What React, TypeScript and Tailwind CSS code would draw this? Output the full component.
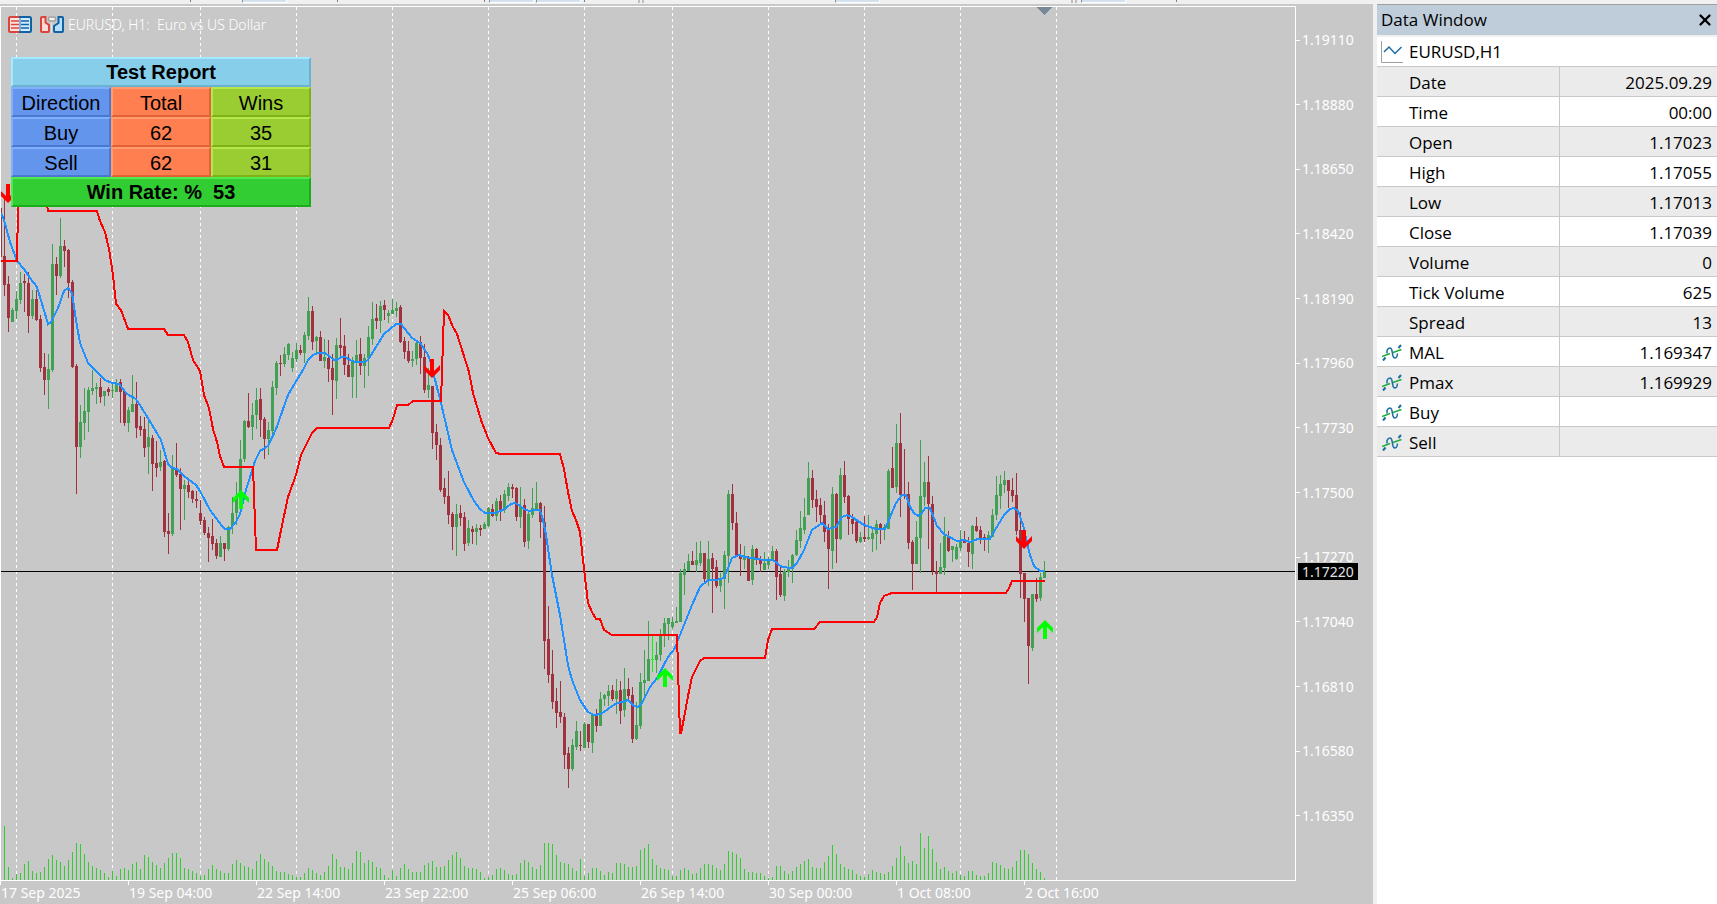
import { X } from "lucide-react";

// one candle per line item: direction, high, body top, body bottom, low (chart units)
const CANDLES = `
R 198 256 285 296,R 276 284 318 332,G 308 310 322 322,G 291 299 311 319,G 272 283 300 304,R 274 281 283 312,
R 272 283 316 333,G 290 299 316 319,R 290 299 320 321,R 315 319 368 372,R 353 367 380 395,G 354 369 380 409,
G 244 264 370 372,R 257 264 276 295,G 218 246 276 278,R 240 246 251 267,R 249 250 283 298,R 280 282 367 368,
R 364 366 447 494,G 405 422 447 458,G 388 411 423 440,G 387 390 412 432,G 370 388 391 395,G 383 387 389 404,
R 378 387 397 403,G 391 391 396 406,R 387 389 392 396,G 383 390 391 398,G 379 383 392 392,R 379 382 392 423,
R 390 391 423 426,G 407 410 423 432,G 375 404 412 412,R 382 404 428 438,R 416 426 430 436,R 417 429 448 457,
G 419 437 447 474,R 435 438 464 491,R 441 463 468 477,G 450 462 467 471,R 460 461 532 537,R 513 531 534 554,
G 455 469 534 536,R 443 469 475 477,R 468 474 489 530,G 480 485 489 520,R 481 485 492 498,R 490 491 499 503,
R 491 499 501 508,R 500 513 521 525,R 517 520 533 535,R 527 533 538 562,R 519 536 544 550,R 539 543 556 559,
G 536 543 557 557,R 543 543 549 561,G 526 527 549 551,G 497 513 526 534,G 482 497 513 525,G 440 459 500 501,
G 420 421 459 462,R 393 421 427 428,G 403 415 427 440,G 388 400 415 429,R 388 399 420 437,R 417 419 439 459,
G 422 430 439 455,G 381 387 431 434,G 361 363 388 395,R 355 363 364 376,G 347 354 364 367,G 343 344 355 360,
G 352 358 368 372,G 343 350 359 362,R 345 350 353 355,G 332 335 353 363,G 297 311 336 340,R 306 311 342 350,
G 336 337 341 354,R 331 337 361 361,G 339 357 361 368,R 340 358 369 382,R 354 368 380 415,G 338 345 381 399,
R 318 345 348 358,R 335 346 365 375,R 354 365 377 377,G 357 361 377 398,G 340 355 362 398,R 338 354 366 375,
G 354 358 366 388,G 326 337 358 376,G 302 319 339 345,R 304 318 321 329,G 301 306 321 333,R 300 305 310 320,
G 310 313 316 323,G 299 310 314 314,G 302 308 311 317,R 305 307 342 343,R 337 341 352 359,R 341 351 361 363,
G 351 359 361 367,G 342 343 359 365,R 336 342 358 374,R 344 357 390 393,G 368 385 390 398,R 386 386 433 449,
R 424 432 445 460,R 438 445 490 492,R 478 488 497 504,R 471 496 515 524,R 512 514 527 550,G 504 514 527 556,
R 505 513 518 526,R 512 517 544 551,G 520 528 543 546,R 526 529 532 544,G 524 528 532 545,R 525 528 530 536,
G 522 524 529 529,G 507 508 526 527,R 504 509 516 517,G 498 501 516 521,R 495 501 510 521,G 490 494 510 513,
G 483 487 496 501,R 484 487 489 498,R 487 488 517 521,G 487 507 517 528,R 499 505 542 547,G 512 514 541 549,
G 488 508 515 518,G 482 503 509 509,R 502 503 522 538,R 506 522 641 669,R 606 639 675 683,R 650 674 702 709,
R 688 701 713 728,R 681 712 717 723,R 713 717 755 769,R 747 753 769 788,G 739 745 769 771,G 721 731 747 750,
R 731 745 746 751,G 722 724 748 748,R 724 724 742 748,G 713 715 743 753,R 709 714 726 732,G 692 699 726 726,
G 694 695 699 706,G 685 691 696 706,R 685 690 699 701,G 679 691 699 714,R 681 690 711 724,G 668 689 710 717,
R 678 689 696 700,R 687 695 739 743,G 702 725 739 740,G 673 682 726 729,G 650 680 683 696,G 621 659 681 681,
L 636 659 660 672,G 642 655 660 673,G 629 635 655 661,G 618 623 636 647,G 618 618 624 640,G 617 622 627 629,
G 607 621 623 623,G 569 573 622 622,G 563 569 575 595,G 554 561 571 571,R 551 561 565 565,G 542 560 565 572,
G 541 553 563 566,R 553 553 579 583,G 541 559 579 586,R 553 558 569 613,R 560 567 586 588,G 573 579 586 592,
G 551 555 579 609,G 490 494 556 583,R 484 494 523 530,R 512 523 555 557,R 544 555 559 576,G 546 557 560 569,
R 556 557 581 581,G 545 549 580 585,R 548 549 560 565,R 556 560 564 572,G 552 563 570 570,G 557 561 565 569,
G 546 551 561 561,R 549 551 577 600,R 565 574 595 597,G 569 571 596 601,G 560 568 572 577,G 554 555 569 583,
G 530 540 555 556,G 511 528 541 548,G 498 517 530 534,G 462 478 515 515,R 470 478 500 508,R 490 499 507 522,
R 498 505 515 524,R 501 515 532 542,R 524 529 549 589,G 487 494 551 569,R 493 494 539 563,G 468 475 539 540,
R 461 475 497 503,R 495 496 519 535,R 514 519 524 534,R 521 522 541 543,G 532 537 542 543,R 516 537 539 542,
G 515 537 539 540,G 528 533 539 552,G 520 524 534 550,R 523 524 530 544,G 524 527 530 540,G 469 471 529 529,
R 447 468 488 488,G 424 443 487 493,R 413 443 495 517,R 449 494 496 499,R 482 494 543 549,R 540 542 564 590,
G 521 537 564 564,G 440 496 538 573,G 462 482 497 506,R 456 482 504 549,R 496 504 571 575,R 561 571 574 592,
G 543 567 574 574,G 517 536 568 575,R 531 536 551 552,G 546 546 550 562,G 544 547 559 560,G 530 541 548 551,
R 531 540 543 543,R 537 543 552 567,G 525 526 554 569,R 517 526 531 532,R 526 530 538 544,R 534 537 539 551,
G 531 535 539 553,G 509 515 537 537,G 476 495 515 520,G 475 484 496 509,G 471 480 485 493,R 480 480 491 508,
R 478 490 496 502,R 473 495 531 535,R 512 530 574 598,R 573 573 599 622,R 598 598 646 684,G 594 594 648 651,
R 578 594 599 602,G 573 577 598 601,G 561 572 578 578`
  .trim()
  .split(",")
  .map((item) => {
    const [kind, ...values] = item.trim().split(" ");
    const [high, top, bottom, low] = values.map(Number);
    return { kind, high, top, bottom, low };
  });

const VOLUMES = [
  54, 13, 2, 6, 7, 16, 19, 9, 7, 8, 13, 21, 25, 20, 18, 14, 20, 28, 37, 36, 26,
  18, 14, 12, 10, 7, 3, 9, 4, 11, 12, 10, 16, 18, 11, 25, 23, 18, 15, 12, 17,
  22, 27, 27, 22, 12, 11, 9, 7, 4, 5, 11, 15, 11, 9, 7, 7, 16, 20, 17, 14, 13,
  11, 19, 26, 21, 18, 14, 9, 8, 8, 6, 5, 3, 3, 7, 12, 10, 7, 5, 8, 14, 26, 21,
  13, 13, 11, 17, 29, 28, 17, 20, 18, 13, 12, 5, 2, 10, 4, 12, 16, 11, 8, 8, 8,
  15, 17, 19, 13, 13, 14, 20, 25, 28, 22, 14, 12, 12, 11, 8, 2, 3, 5, 11, 12,
  10, 6, 5, 6, 17, 20, 18, 13, 11, 15, 37, 37, 36, 25, 18, 17, 16, 12, 9, 21, 4,
  7, 12, 12, 9, 5, 8, 7, 17, 17, 16, 13, 13, 14, 30, 32, 36, 21, 15, 12, 11, 10,
  4, 4, 10, 12, 10, 6, 7, 12, 16, 16, 15, 12, 10, 16, 29, 28, 26, 22, 11, 8, 8,
  7, 7, 4, 2, 3, 14, 14, 9, 6, 9, 13, 16, 19, 21, 13, 12, 12, 18, 24, 35, 26,
  16, 13, 11, 10, 6, 4, 3, 6, 10, 8, 7, 6, 8, 14, 22, 34, 24, 17, 19, 16, 47,
  32, 44, 31, 18, 11, 13, 9, 7, 9, 5, 4, 9, 9, 5, 4, 4, 7, 18, 17, 15, 12, 11,
  13, 19, 30, 30, 26, 17, 11, 8, 2,
];

const MAL_LINE =
  "1,213 4,220 10,242 17,261 24,269 30,278 37,287 43,307 48,324 51,322 58,308 64,291 68,288 72,293 76,320 80,343 88,363 105,380 112,383 119,384 127,394 136,399 148,418 161,440 168,464 172,468 177,469 184,476 196,485 200,491 210,510 216,518 222,526 225,529 230,529 236,522 240,514 246,490 255,461 260,451 268,446 276,429 288,395 295,383 303,370 308,360 313,355 318,353 325,353 329,356 334,360 337,360 341,357 345,357 352,361 356,362 364,362 368,360 384,334 396,324 401,324 412,338 420,343 427,353 430,360 441,403 452,450 464,482 474,501 480,509 485,513 495,513 503,510 511,504 515,503 519,505 524,509 529,511 535,510 540,510 543,520 546,535 552,575 560,615 568,665 572,680 580,700 588,712 594,715 601,714 615,704 622,702 628,700 634,706 638,707 642,703 650,687 657,678 668,657 675,648 678,640 692,605 700,587 708,580 716,580 724,578 732,558 739,555 745,557 764,560 773,560 782,567 792,568 797,563 804,550 812,530 822,523 828,529 836,527 842,517 847,515 852,517 858,521 864,525 876,529 885,529 896,503 902,495 906,495 910,507 914,513 918,516 922,513 925,508 930,508 937,526 944,534 957,541 964,540 970,542 978,539 990,539 992,535 1004,515 1010,509 1014,508 1018,511 1023,525 1030,555 1034,566 1040,571 1044,571";

const PMAX_LINE =
  "1,261 17,261 18,207 19,200 46,200 48,211 97,211 100,221 105,232 109,249 113,275 116,304 121,310 128,329 164,329 168,335 184,335 188,342 193,360 200,371 204,395 209,408 213,429 217,442 220,456 224,467 253,467 256,550 277,550 280,535 288,497 296,475 301,455 312,433 317,428 389,428 393,419 397,405 408,405 413,401 441,401 444,311 448,315 453,327 457,334 469,372 473,393 481,420 488,438 496,453 501,454 560,454 564,469 568,492 572,511 576,520 580,532 583,560 588,603 592,612 596,619 600,619 604,630 612,635 677,635 680,733 681,733 684,718 688,696 692,677 700,661 704,658 765,658 768,640 772,629 814,629 820,622 874,622 877,617 880,603 884,596 892,593 1006,593 1009,588 1012,581 1045,581";

const DAY_LINES = [16, 112, 200, 296, 392, 488, 584, 672, 768, 864, 960, 1056];

const PRICES = [
  "1.19110",
  "1.18880",
  "1.18650",
  "1.18420",
  "1.18190",
  "1.17960",
  "1.17730",
  "1.17500",
  "1.17270",
  "1.17040",
  "1.16810",
  "1.16580",
  "1.16350",
];

const DATES = [
  "17 Sep 2025",
  "19 Sep 04:00",
  "22 Sep 14:00",
  "23 Sep 22:00",
  "25 Sep 06:00",
  "26 Sep 14:00",
  "30 Sep 00:00",
  "1 Oct 08:00",
  "2 Oct 16:00",
];

const DATA_ROWS = [
  { label: "Date", value: "2025.09.29" },
  { label: "Time", value: "00:00" },
  { label: "Open", value: "1.17023" },
  { label: "High", value: "1.17055" },
  { label: "Low", value: "1.17013" },
  { label: "Close", value: "1.17039" },
  { label: "Volume", value: "0" },
  { label: "Tick Volume", value: "625" },
  { label: "Spread", value: "13" },
  { label: "MAL", value: "1.169347", indicator: true },
  { label: "Pmax", value: "1.169929", indicator: true },
  { label: "Buy", value: "", indicator: true },
  { label: "Sell", value: "", indicator: true },
];

const CANDLE_FILL: Record<string, string> = {
  G: "fill-[#42a052]",
  R: "fill-[#a0323f]",
  L: "fill-[#00ff00]",
};

const UP_ARROW = "0,0 8,8 8,13 2,7 2,19 -2,19 -2,7 -8,13 -8,8";
const DOWN_ARROW = "0,19 8,11 8,6 2,12 2,0 -2,0 -2,12 -8,6 -8,11";

function Toolbar() {
  const tab = "h-[3px] w-[45px] border-l border-r border-b border-l-[#909090] border-r-white border-b-white bg-[#d3e1ee]";
  const line = "h-[2px] w-px bg-[#808080]";
  const grip = "h-[3px] w-[6px] border-x-2 border-[#c0c0c0]";
  return (
    <div className="flex h-1 shrink-0 items-start overflow-hidden bg-[#f0f0f0]">
      <div className={`ml-[190px] ${line}`} />
      <div className={`ml-[51px] ${tab}`} />
      <div className={`ml-[50px] ${line}`} />
      <div className={`ml-[146px] ${line}`} />
      <div className={`ml-1 ${tab}`} />
      <div className={`ml-[2px] ${tab}`} />
      <div className={`ml-[3px] ${line}`} />
      <div className={`ml-[53px] ${grip}`} />
      <div className={`ml-[191px] ${tab}`} />
      <div className={`ml-[191px] ${grip}`} />
      <div className={`ml-[4px] ${tab}`} />
      <div className={`ml-[50px] ${line}`} />
    </div>
  );
}

function QuoteIcon() {
  return (
    <svg width="24" height="18" viewBox="0 0 24 18" aria-hidden="true">
      <path d="M12 1H2.500Q1 1 1 2.500v12Q1 16 2.500 16H12z" fill="#ffe3df" stroke="#d9453d" strokeWidth="2" />
      <path d="M12 1h9.500q1.500 0 1.500 1.500v12q0 1.500-1.500 1.500H12z" fill="#d2ebff" stroke="#0f62a3" strokeWidth="2" />
      <path d="M3 5h8M3 8.500h8M3 12h8" stroke="#d9453d" strokeWidth="1.500" />
      <path d="M13 5h8M13 8.500h8M13 12h8" stroke="#0f62a3" strokeWidth="1.500" />
      <path d="M12 2v13" stroke="#fff" />
    </svg>
  );
}

function TradeIcon() {
  return (
    <svg width="24" height="18" viewBox="0 0 24 18" aria-hidden="true">
      <path d="M1 2q0-1 1-1h3.500v5.500L9 9v6q0 1-1 1H2q-1 0-1-1z" fill="#ffd9d4" stroke="#d9453d" strokeWidth="2" />
      <path d="M23 2q0-1-1-1h-3.500v6L14 10v5q0 1 1 1h7q1 0 1-1z" fill="#b5e0ff" stroke="#0f62a3" strokeWidth="2" />
      <rect x="8.500" y="1" width="7" height="4" rx="1.500" fill="#f2f2f2" stroke="#a0a0a0" strokeWidth="1.500" />
      <path d="M11.500 6v11" stroke="#e4e4e4" />
    </svg>
  );
}

function ChartIcon() {
  return (
    <svg width="24" height="24" viewBox="0 0 24 24" fill="none" aria-hidden="true">
      <path d="M1.500 1v21.500H23" stroke="#a0a0a0" />
      <path d="M4 12l5-5 6 6.500L21.500 7" stroke="#1c6ea4" strokeWidth="1.500" />
    </svg>
  );
}

function IndicatorIcon() {
  return (
    <svg width="20" height="18" viewBox="0 0 20 18" fill="none" aria-hidden="true">
      <path d="M0 12.500L8 9.500M11 8.500L19.500 5.500" stroke="#1fae3a" strokeWidth="1.500" />
      <path d="M1 16.500L3.500 13.500M16.500 4L19 1" stroke="#1c6ea4" strokeWidth="2" />
      <path d="M5 9.500V6.500Q6 4 8 4 9.500 4 10 7l1 5q.5 2 2 2 2 0 2.500-4.500" stroke="#1c6ea4" strokeWidth="1.500" />
    </svg>
  );
}

function PricePlot() {
  return (
    <svg
      className="block h-full w-full"
      viewBox="0 6 1296 875"
      preserveAspectRatio="none"
      shapeRendering="crispEdges"
      role="img"
      aria-label="EURUSD hourly candles"
    >
      {DAY_LINES.map((x) => (
        <path key={x} d={`M${x + 0.5} 7V880`} stroke="#fff" strokeDasharray="3 3" />
      ))}
      {VOLUMES.map((height, i) => (
        <rect key={i} x={4 + i * 4} y={880 - height} width="1" height={height} fill="#32cd32" />
      ))}
      <path d="M1 571.500H1295" stroke="#000" />
      <rect x="1" y="208" width="1" height="49" fill="#a0323f" />
      {CANDLES.map(({ kind, high, top, bottom, low }, i) => (
        <g key={i} className={CANDLE_FILL[kind]}>
          <rect x={4 + i * 4} y={high} width="1" height={low - high} />
          <rect x={3 + i * 4} y={top} width="3" height={Math.max(bottom - top, 1)} />
        </g>
      ))}
      <polyline points={MAL_LINE} fill="none" stroke="#1e90ff" strokeWidth="2" />
      <polyline points={PMAX_LINE} fill="none" stroke="#f00" strokeWidth="2" />
      <g fill="#0f0" shapeRendering="auto">
        <polygon points={UP_ARROW} transform="translate(241 490)" />
        <polygon points={UP_ARROW} transform="translate(665 668)" />
        <polygon points={UP_ARROW} transform="translate(1045 620)" />
      </g>
      <g fill="#f00" shapeRendering="auto">
        <polygon points={DOWN_ARROW} transform="translate(8 184)" />
        <polygon points={DOWN_ARROW} transform="translate(432 359)" />
        <polygon points={DOWN_ARROW} transform="translate(1024 530)" />
      </g>
      <path d="M1037 7h15l-7.500 8z" fill="#778899" />
      <path d="M.5 881V6.500H1295.500V880.500H0" fill="none" stroke="#fff" />
    </svg>
  );
}

function TestReport() {
  const blue = "border-2 border-t-[#7fb0ff] border-l-[#7fb0ff] border-r-[#4a78d0] border-b-[#4a78d0] bg-[#6495ed]";
  const coral = "border-2 border-t-[#ff9b6c] border-l-[#ff9b6c] border-r-[#e06236] border-b-[#e06236] bg-[#ff7f50]";
  const olive = "border-2 border-t-[#b5e84e] border-l-[#b5e84e] border-r-[#7fb017] border-b-[#7fb017] bg-[#9acd32]";
  const rows = [
    ["Buy", "62", "35"],
    ["Sell", "62", "31"],
  ];
  return (
    <table className="absolute top-[51px] left-[11px] w-[300px] table-fixed border-separate border-spacing-0 text-center font-['Liberation_Sans',Arial,sans-serif] text-[20px] leading-[26px] text-black">
      <thead>
        <tr>
          <th colSpan={3} className="border-2 border-t-[#a3e9ff] border-l-[#a3e9ff] border-r-[#6bb2cf] border-b-[#6bb2cf] bg-[#87ceeb] p-0 font-bold">
            Test Report
          </th>
        </tr>
        <tr className="leading-6">
          <th className={`p-0 pt-0.5 font-normal ${blue}`}>Direction</th>
          <th className={`p-0 pt-0.5 font-normal ${coral}`}>Total</th>
          <th className={`p-0 pt-0.5 font-normal ${olive}`}>Wins</th>
        </tr>
      </thead>
      <tbody className="leading-6">
        {rows.map(([direction, total, wins]) => (
          <tr key={direction}>
            <td className={`p-0 pt-0.5 ${blue}`}>{direction}</td>
            <td className={`p-0 pt-0.5 ${coral}`}>{total}</td>
            <td className={`p-0 pt-0.5 ${olive}`}>{wins}</td>
          </tr>
        ))}
      </tbody>
      <tfoot>
        <tr>
          <td colSpan={3} className="border-2 border-t-[#50ea50] border-l-[#50ea50] border-r-[#19ad19] border-b-[#19ad19] bg-[#32cd32] p-0 font-bold whitespace-pre">
            {"Win Rate: %  53"}
          </td>
        </tr>
      </tfoot>
    </table>
  );
}

function ChartPanel() {
  return (
    <main className="grid min-w-0 flex-1 grid-cols-[minmax(0,1fr)_77px] grid-rows-[minmax(0,1fr)_23px] overflow-hidden bg-[#c8c8c8] pt-[2px] font-['Noto_Sans',Tahoma,sans-serif] text-[14px] text-white">
      <div className="relative min-h-0">
        <PricePlot />
        <div className="absolute top-[8px] left-[8px] flex items-center">
          <QuoteIcon />
          <span className="ml-2">
            <TradeIcon />
          </span>
          <h1 className="ml-1 font-light whitespace-pre">{"EURUSD, H1:  Euro vs US Dollar"}</h1>
        </div>
        <TestReport />
      </div>
      <div className="relative flex flex-col justify-between pt-[26px] pb-[57px]">
        {PRICES.map((price) => (
          <div key={price} className="flex h-4 items-center gap-[2px] leading-4">
            <span className="h-px w-1 bg-white" />
            {price}
          </div>
        ))}
        <div className="absolute top-[557px] left-[2px] h-[17px] w-[60px] bg-black pl-1 leading-[17px] text-[#e0e0e0]">
          1.17220
        </div>
      </div>
      <div className="flex overflow-hidden">
        {DATES.map((date) => (
          <div key={date} className="flex w-32 shrink-0 leading-6">
            <span className="h-1 w-px bg-white" />
            {date}
          </div>
        ))}
      </div>
    </main>
  );
}

function DataWindow() {
  return (
    <aside className="w-[344px] shrink-0 border-l-4 border-[#f0f0f0] bg-white font-['Open_Sans','Segoe_UI',sans-serif] text-[17px] text-black">
      <header className="flex h-[31px] items-center justify-between border-t border-[#a0a0a0] bg-[#bfcddb] pr-[3px] pl-1">
        <h2>Data Window</h2>
        <button type="button" aria-label="Close">
          <X size={18} strokeWidth={3} />
        </button>
      </header>
      <div className="flex h-8 items-center gap-[5px] border-t-2 border-b border-t-[#f0f0f0] border-b-[#c8c8c8] pl-[3px]">
        <ChartIcon />
        EURUSD,H1
      </div>
      <table className="w-full table-fixed border-separate border-spacing-0">
        <tbody>
          {DATA_ROWS.map(({ label, value, indicator }) => (
            <tr key={label} className="h-[30px] leading-[27px] odd:bg-[#ebebeb]">
              <th className="w-[183px] border-r border-b border-[#c8c8c8] p-0 pt-0.5 text-left font-normal">
                <div className="flex items-center">
                  <span className="w-8 pl-[5px]">{indicator && <IndicatorIcon />}</span>
                  {label}
                </div>
              </th>
              <td className="border-b border-[#c8c8c8] p-0 pt-0.5 pr-[5px] text-right">{value}</td>
            </tr>
          ))}
        </tbody>
      </table>
    </aside>
  );
}

export default function App() {
  return (
    <div className="flex h-screen flex-col overflow-hidden">
      <Toolbar />
      <div className="flex min-h-0 flex-1">
        <ChartPanel />
        <DataWindow />
      </div>
    </div>
  );
}
